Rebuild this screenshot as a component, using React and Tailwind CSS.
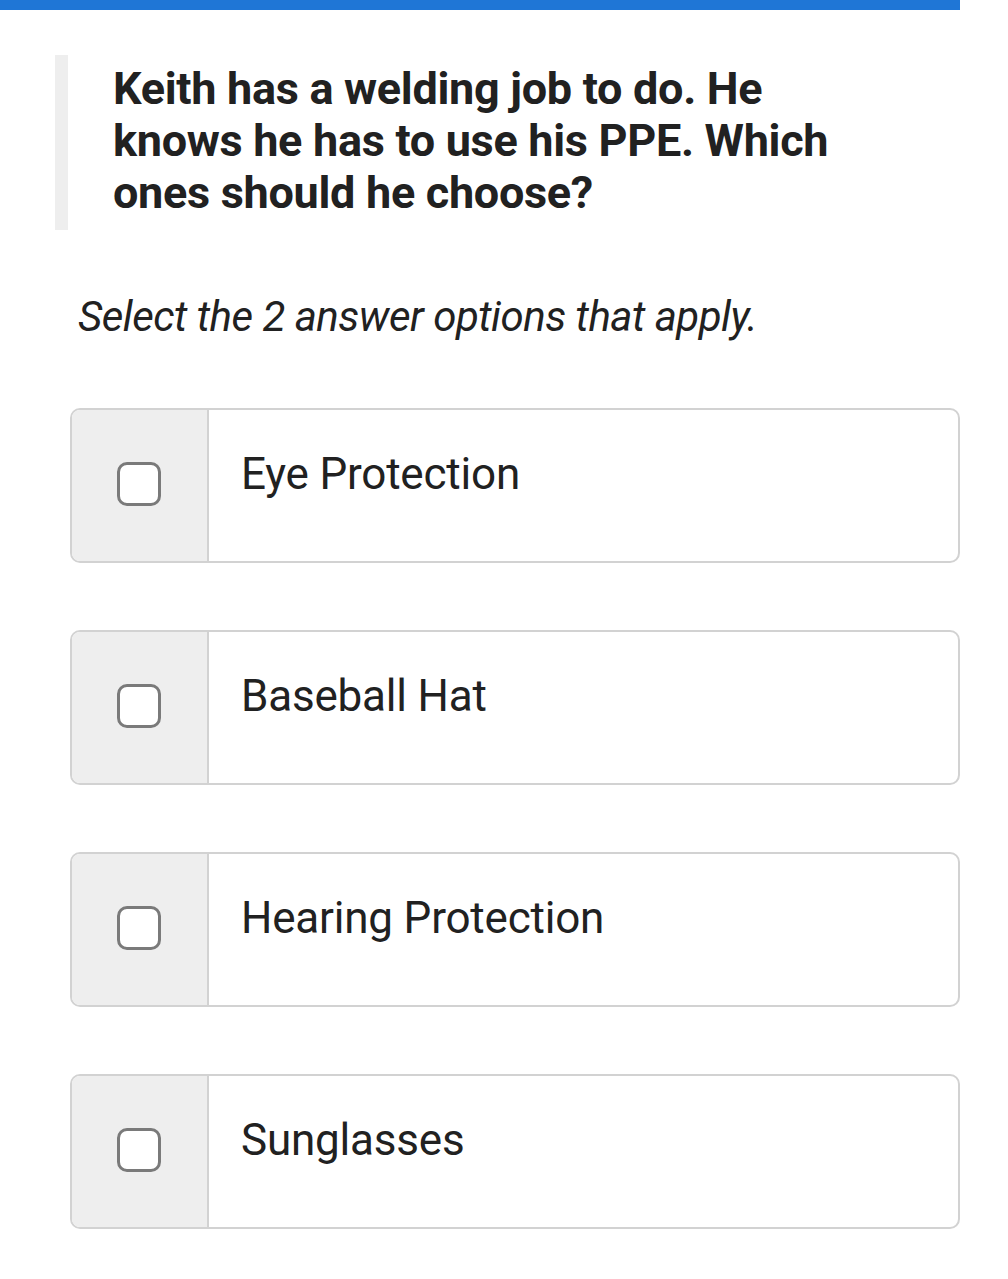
const options = ["Eye Protection", "Baseball Hat", "Hearing Protection", "Sunglasses"];

function Checkbox() {
  return <div className="w-[44px] h-[44px] rounded-[10px] border-[3px] border-[#7a7a7a] bg-white" />;
}

function Option({ label }) {
  return (
    <div className="flex w-[890px] h-[155px] rounded-[10px] border-2 border-[#d2d2d2] overflow-hidden bg-white">
      <div className="w-[137px] shrink-0 bg-[#eeeeee] border-r-2 border-[#d2d2d2] flex items-start justify-center pt-[52px] pr-[2px]">
        <Checkbox />
      </div>
      <div className="pl-[32px] pt-[38px] text-[44px] leading-[52px] text-[#212121] tracking-[-0.2px]">{label}</div>
    </div>
  );
}

export default function App() {
  return (
    <div className="w-[1008px] min-h-[1279px] bg-white font-['Roboto',sans-serif]">
      <div className="w-[960px] h-[10px] bg-[#1f76d6]" />
      <div className="ml-[55px] mt-[45px] h-[175px] border-l-[13px] border-[#eeeeee] pl-[45px] pt-[8px]">
        <p className="w-[760px] text-[45px] leading-[52px] font-bold text-[#212121] tracking-[-0.3px]">
          Keith has a welding job to do. He knows he has to use his PPE. Which ones should he choose?
        </p>
      </div>
      <p className="ml-[78px] mt-[61px] text-[42px] leading-[52px] italic text-[#212121] tracking-[-0.5px]">
        Select the 2 answer options that apply.
      </p>
      <div className="ml-[70px] mt-[65px] flex flex-col gap-[67px]">
        {options.map((o) => (
          <Option key={o} label={o} />
        ))}
      </div>
    </div>
  );
}
